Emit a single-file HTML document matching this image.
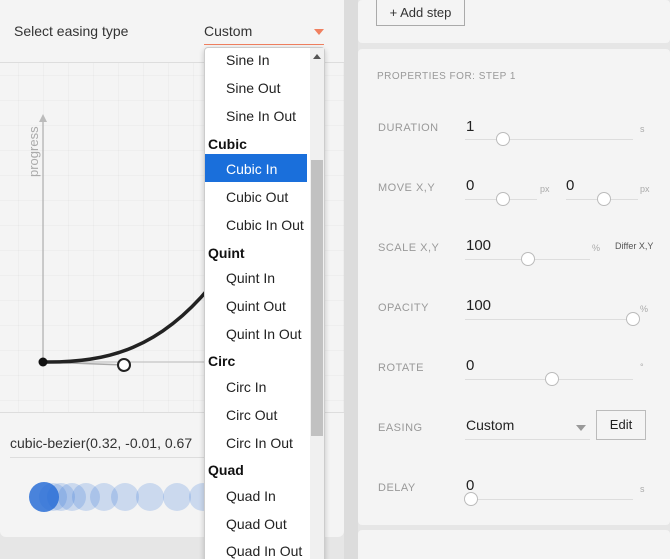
<!DOCTYPE html>
<html><head><meta charset="utf-8"><style>
*{margin:0;padding:0;box-sizing:border-box}
html,body{width:670px;height:559px;overflow:hidden}
body{background:#e6e6e6;font-family:"Liberation Sans",sans-serif;position:relative;color:#222}
.abs{position:absolute}
.modal{left:0;top:0;width:344px;height:537px;background:#f4f4f4;border-radius:0 0 6px 6px}
.grid{left:0;top:62px;width:344px;height:351px;border-top:1px solid #ddd;border-bottom:1px solid #ddd;
background-image:linear-gradient(90deg,rgba(0,0,0,.025) 1px,transparent 1px),linear-gradient(rgba(0,0,0,.025) 1px,transparent 1px);background-size:25px 25px;background-position:18px 12px}
.card{background:#f4f4f4;border-radius:4px}
.lbl{font-size:11px;color:#999;letter-spacing:.5px;left:378px}
.val{font-size:15px;color:#222}
.line{height:1px;background:#ddd}
.knob{width:14px;height:14px;border-radius:50%;background:#fff;border:1px solid #bbb}
.unit{font-size:9px;color:#aaa}
.dd{left:204px;top:47px;width:121px;height:520px;background:#fff;border:1px solid #ccc;border-radius:4px 4px 0 0;box-shadow:0 2px 6px rgba(0,0,0,.2)}
.it{position:absolute;left:21px;font-size:14px;color:#222}
.gr{position:absolute;left:3px;font-size:14px;font-weight:bold;color:#111}
</style></head><body>
<div class="abs" style="left:344px;top:0;width:14px;height:559px;background:#dcdcdc"></div>
<div class="abs modal"></div>
<div class="abs" style="left:14px;top:23px;font-size:14px;color:#333">Select easing type</div>
<div class="abs" style="left:204px;top:23px;font-size:14px;color:#333">Custom</div>
<div class="abs" style="left:314px;top:29px;width:0;height:0;border-left:5px solid transparent;border-right:5px solid transparent;border-top:6px solid #f08060"></div>
<div class="abs" style="left:204px;top:44px;width:120px;height:1px;background:#f08060"></div>
<div class="abs grid"></div>
<svg class="abs" style="left:0;top:62px" width="344" height="351">
<line x1="43" y1="54" x2="43" y2="300" stroke="#bbb" stroke-width="1.5"/>
<path d="M39 60 L43 52 L47 60Z" fill="#bbb"/>
<line x1="43" y1="300" x2="210" y2="300" stroke="#ccc" stroke-width="1.5"/>
<line x1="43" y1="300" x2="124" y2="303" stroke="#aaa" stroke-width="1.5"/>
<path d="M43 300 C110 301 160 285 210 225" stroke="#222" stroke-width="3.5" fill="none"/>
<circle cx="43" cy="300" r="4.5" fill="#111"/>
<circle cx="124" cy="303" r="6" fill="#fff" stroke="#222" stroke-width="2"/>
<text x="38" y="115" transform="rotate(-90 38 115)" font-family="Liberation Sans" font-size="13" fill="#aaa">progress</text>
</svg>
<div class="abs" style="left:10px;top:435px;font-size:14px;color:#333">cubic-bezier(0.32, -0.01, 0.67</div>
<div class="abs line" style="left:10px;top:457px;width:200px;background:#ddd"></div>
<svg class="abs" style="left:25px;top:478px" width="190" height="40">
<g fill="#2a6fd6">
<circle cx="19" cy="19" r="15" fill-opacity=".85"/>
<circle cx="28" cy="19" r="14" fill-opacity=".2"/><circle cx="36" cy="19" r="14" fill-opacity=".2"/>
<circle cx="47" cy="19" r="14" fill-opacity=".2"/><circle cx="61" cy="19" r="14" fill-opacity=".2"/>
<circle cx="79" cy="19" r="14" fill-opacity=".2"/><circle cx="100" cy="19" r="14" fill-opacity=".2"/>
<circle cx="125" cy="19" r="14" fill-opacity=".2"/><circle cx="152" cy="19" r="14" fill-opacity=".2"/>
<circle cx="178" cy="19" r="14" fill-opacity=".2"/></g></svg>
<div class="abs card" style="left:358px;top:0;width:312px;height:43px"></div>
<div class="abs" style="left:376px;top:-1px;width:89px;height:27px;border:1px solid #aaa;font-size:13px;text-align:center;line-height:26px;color:#333">+ Add step</div>
<div class="abs card" style="left:358px;top:49px;width:312px;height:476px"></div>
<div class="abs card" style="left:358px;top:530px;width:312px;height:40px"></div>
<div class="abs lbl" style="left:377px;top:71px;font-size:10px">PROPERTIES FOR: STEP 1</div>
<div class="abs lbl" style="top:122px">DURATION</div>
<div class="abs val" style="left:466px;top:118px">1</div><div class="abs line" style="left:465px;top:139px;width:168px"></div><div class="abs knob" style="left:496px;top:132px"></div><div class="abs unit" style="left:640px;top:124px">s</div>
<div class="abs lbl" style="top:182px">MOVE X,Y</div>
<div class="abs val" style="left:466px;top:177px">0</div><div class="abs line" style="left:465px;top:199px;width:72px"></div><div class="abs knob" style="left:496px;top:192px"></div><div class="abs unit" style="left:540px;top:184px">px</div>
<div class="abs val" style="left:566px;top:177px">0</div><div class="abs line" style="left:566px;top:199px;width:72px"></div><div class="abs knob" style="left:597px;top:192px"></div><div class="abs unit" style="left:640px;top:184px">px</div>
<div class="abs lbl" style="top:242px">SCALE X,Y</div>
<div class="abs val" style="left:466px;top:237px">100</div><div class="abs line" style="left:465px;top:259px;width:125px"></div><div class="abs knob" style="left:521px;top:252px"></div><div class="abs unit" style="left:592px;top:243px">%</div>
<div class="abs" style="left:615px;top:241px;font-size:9px;color:#555">Differ X,Y</div>
<div class="abs lbl" style="top:302px">OPACITY</div>
<div class="abs val" style="left:466px;top:297px">100</div><div class="abs line" style="left:465px;top:319px;width:168px"></div><div class="abs knob" style="left:626px;top:312px"></div><div class="abs unit" style="left:640px;top:304px">%</div>
<div class="abs lbl" style="top:362px">ROTATE</div>
<div class="abs val" style="left:466px;top:357px">0</div><div class="abs line" style="left:465px;top:379px;width:168px"></div><div class="abs knob" style="left:545px;top:372px"></div><div class="abs unit" style="left:640px;top:362px">°</div>
<div class="abs lbl" style="top:422px">EASING</div>
<div class="abs val" style="left:466px;top:417px;font-size:14px">Custom</div><div class="abs line" style="left:465px;top:439px;width:125px"></div>
<div class="abs" style="left:576px;top:425px;border-left:5px solid transparent;border-right:5px solid transparent;border-top:6px solid #999"></div>
<div class="abs" style="left:596px;top:410px;width:50px;height:30px;border:1px solid #bbb;font-size:13px;text-align:center;line-height:28px;color:#222">Edit</div>
<div class="abs lbl" style="top:482px">DELAY</div>
<div class="abs val" style="left:466px;top:477px">0</div><div class="abs line" style="left:465px;top:499px;width:168px"></div><div class="abs knob" style="left:464px;top:492px"></div><div class="abs unit" style="left:640px;top:484px">s</div>
<div class="abs dd">
<div class="abs" style="left:105px;top:0;width:14px;height:520px;background:#f0f0f0"></div>
<div class="abs" style="left:106px;top:112px;width:12px;height:276px;background:#c1c1c1"></div>
<div class="abs" style="left:108px;top:6px;border-left:4px solid transparent;border-right:4px solid transparent;border-bottom:5px solid #555"></div>
<div class="abs" style="left:0;top:106px;width:102px;height:28px;background:#1a6fdb"></div>
<div class="it" style="top:4px">Sine In</div>
<div class="it" style="top:32px">Sine Out</div>
<div class="it" style="top:60px">Sine In Out</div>
<div class="gr" style="top:88px">Cubic</div>
<div class="it" style="top:113px;color:#fff">Cubic In</div>
<div class="it" style="top:141px">Cubic Out</div>
<div class="it" style="top:169px">Cubic In Out</div>
<div class="gr" style="top:197px">Quint</div>
<div class="it" style="top:222px">Quint In</div>
<div class="it" style="top:250px">Quint Out</div>
<div class="it" style="top:278px">Quint In Out</div>
<div class="gr" style="top:305px">Circ</div>
<div class="it" style="top:331px">Circ In</div>
<div class="it" style="top:359px">Circ Out</div>
<div class="it" style="top:387px">Circ In Out</div>
<div class="gr" style="top:414px">Quad</div>
<div class="it" style="top:440px">Quad In</div>
<div class="it" style="top:468px">Quad Out</div>
<div class="it" style="top:495px">Quad In Out</div>
</div>
</body></html>
